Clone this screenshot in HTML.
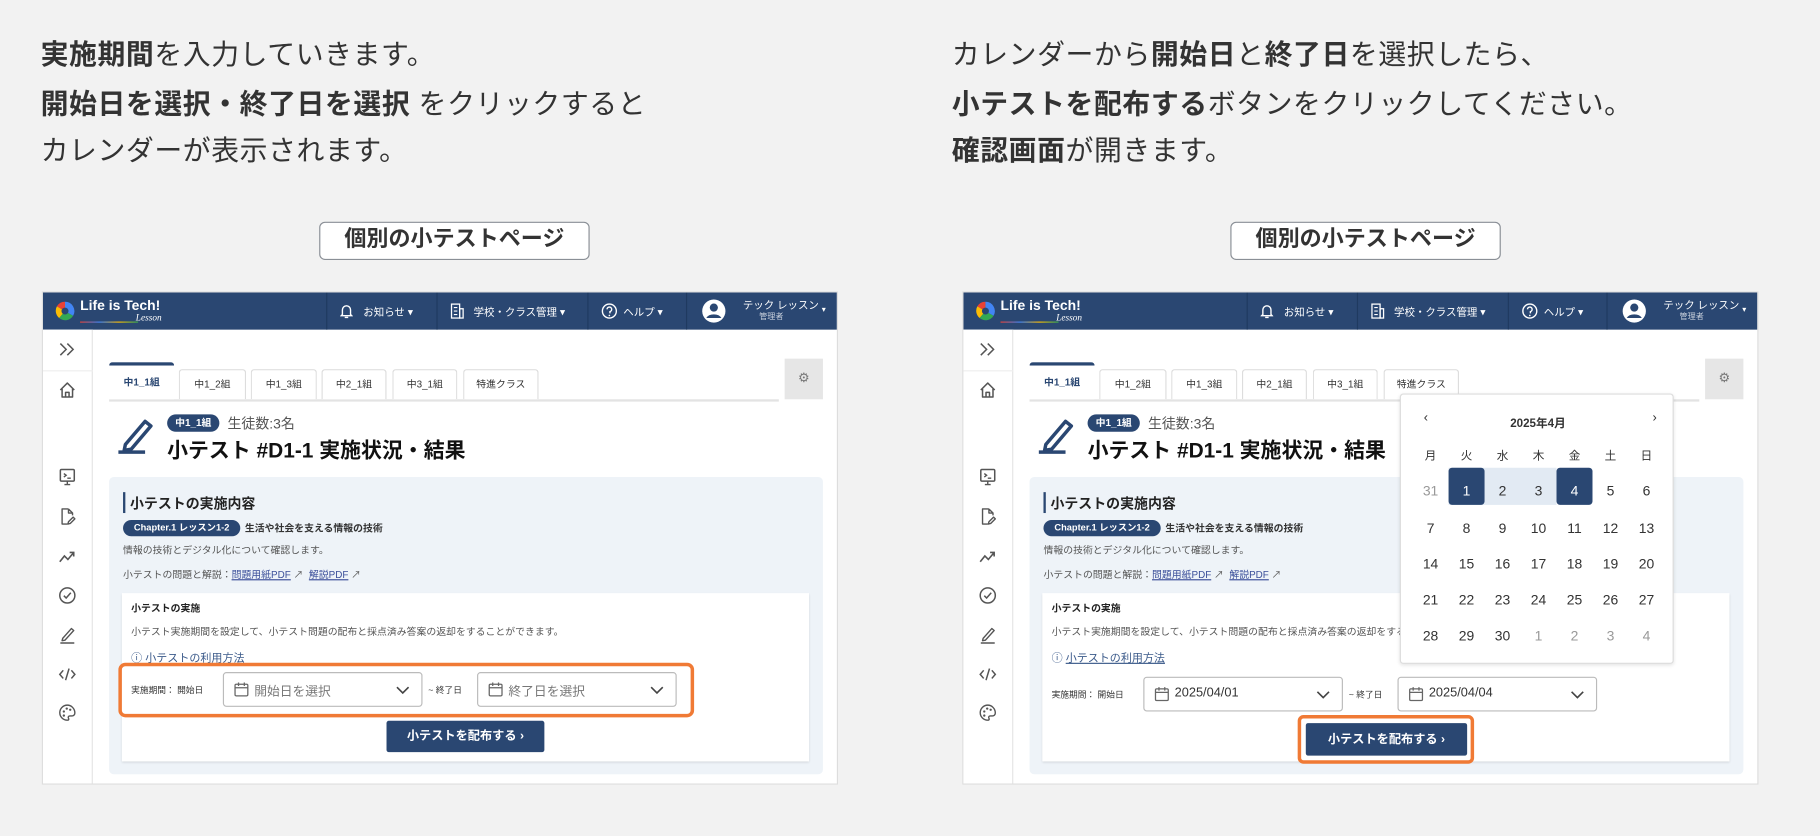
<!DOCTYPE html>
<html><head><meta charset="utf-8"><style>
*{box-sizing:border-box;margin:0;padding:0}
html,body{width:1820px;height:836px;overflow:hidden;background:#f2f2f2}
body{font-family:"Liberation Sans","Noto Sans CJK JP",sans-serif;color:#333}
#w{position:absolute;left:0;top:0;width:1568px;height:720px;transform:scale(1.16071);transform-origin:0 0}
.a{position:absolute;white-space:nowrap}
.txt{font-size:24px;line-height:41px;color:#333;letter-spacing:0.5px}
.txt b{font-weight:bold}
.lbl{position:absolute;top:191px;width:233px;height:33px;border:1.5px solid #8a8f96;border-radius:5px;background:#fff;font-size:19px;font-weight:bold;text-align:center;line-height:30px;color:#333}
.p{position:absolute;top:251px;width:686px;height:425px;background:#fff;border:1px solid #ddd;overflow:hidden}
.hd{position:absolute;left:0;top:0;width:100%;height:32px;background:#2a4772;color:#fff}
.hd .a{font-size:9px;top:10px}
.dv{position:absolute;top:0;width:1px;height:32px;background:#1f3a60}
.sb{position:absolute;left:0;top:32px;width:43px;height:393px;border-right:1px solid #e5e5e5;background:#fff}
.sb svg{position:absolute;left:13px}
.tab{position:absolute;top:66px;height:26px;border:1px solid #ddd;border-bottom:none;border-radius:3px 3px 0 0;font-size:8.5px;text-align:center;line-height:25px;color:#333;background:#fff}
.act{top:60px;height:32px;border:none;border-top:3px solid #2a4772;color:#2a4772;font-weight:bold;line-height:28px}
.navy{background:#2a4772;color:#fff}
.sel{position:absolute;height:30px;border:1px solid #bbb;border-radius:3px;background:#fff;font-size:11px}
.btn{position:absolute;background:#2a4772;color:#fff;font-size:10.5px;font-weight:bold;text-align:center;border-radius:2px}
.cal .a{font-size:12px;color:#333;text-align:center;width:31px}
</style></head><body><div id="w">

<div class="a txt" style="left:35px;top:27px"><b>実施期間</b>を入力していきます。</div>
<div class="a txt" style="left:35px;top:70px"><b>開始日を選択・終了日を選択</b> をクリックすると</div>
<div class="a txt" style="left:35px;top:110px">カレンダーが表示されます。</div>
<div class="a txt" style="left:820px;top:27px">カレンダーから<b>開始日</b>と<b>終了日</b>を選択したら、</div>
<div class="a txt" style="left:820px;top:70px"><b>小テストを配布する</b>ボタンをクリックしてください。</div>
<div class="a txt" style="left:820px;top:110px"><b>確認画面</b>が開きます。</div>
<div class="lbl" style="left:275px">個別の小テストページ</div>
<div class="lbl" style="left:1060px">個別の小テストページ</div>

<svg width="0" height="0" style="position:absolute"><defs>
<g id="cl"><rect x="1.5" y="2.5" width="11" height="10" rx="1" fill="none" stroke="#666" stroke-width="1.1"/><path d="M1.5 5.5h11M4.5 1v3M9.5 1v3" stroke="#666" stroke-width="1.1"/></g>
<g id="chev"><path d="M1 1l5 5 5-5" fill="none" stroke="#444" stroke-width="1.4"/></g>
</defs></svg>

<!-- LEFT -->
<div class="p" style="left:36px">
 <div class="hd">
  <svg class="a" style="left:10px;top:7px" width="18" height="18" viewBox="0 0 18 18"><path d="M9 9L9 1A8 8 0 0 0 2 5Z" fill="#e94235"/><path d="M9 9L2 5A8 8 0 0 0 4 15Z" fill="#fbbc04"/><path d="M9 9L4 15A8 8 0 0 0 16 13Z" fill="#34a853"/><path d="M9 9L16 13A8 8 0 0 0 9 1Z" fill="#4285f4"/><circle cx="9" cy="9" r="3" fill="#2a4772"/></svg>
  <div class="a" style="left:32px;top:4px;font-size:12px;font-weight:bold">Life is Tech!</div>
  <div class="a" style="left:32px;top:25px;width:50px;height:1px;background:linear-gradient(90deg,#e94235,#4285f4,#fbbc04,#34a853)"></div>
  <div class="a" style="left:80px;top:17px;font-size:8px;font-style:italic;font-family:'Liberation Serif',serif">Lesson</div>
  <div class="dv" style="left:244px"></div><div class="dv" style="left:339px"></div><div class="dv" style="left:469px"></div><div class="dv" style="left:554px"></div>
  <svg class="a" style="left:256px;top:9px" width="11" height="14" viewBox="0 0 11 14"><path d="M2 10V6a3.5 3.5 0 0 1 7 0v4l1 1H1z" fill="none" stroke="#fff" stroke-width="1.2"/><path d="M4 12.5h3" stroke="#fff" stroke-width="1.2"/></svg><div class="a" style="left:276px">お知らせ ▾</div>
  <svg class="a" style="left:351px;top:9px" width="12" height="14" viewBox="0 0 12 14"><rect x="1" y="1" width="7" height="12" fill="none" stroke="#fff" stroke-width="1.1"/><rect x="8" y="5" width="3" height="8" fill="none" stroke="#fff" stroke-width="1.1"/><path d="M3 4h3M3 7h3M3 10h3" stroke="#fff"/></svg><div class="a" style="left:371px">学校・クラス管理 ▾</div>
  <svg class="a" style="left:481px;top:9px" width="14" height="14" viewBox="0 0 14 14"><circle cx="7" cy="7" r="6" fill="none" stroke="#fff" stroke-width="1.2"/><path d="M5 5.5a2 2 0 1 1 2.5 2V9" fill="none" stroke="#fff" stroke-width="1.2"/><circle cx="7" cy="10.8" r=".7" fill="#fff"/></svg><div class="a" style="left:500px">ヘルプ ▾</div>
  <svg class="a" style="left:567px;top:5px" width="22" height="22" viewBox="0 0 22 22"><circle cx="11" cy="11" r="10" fill="#fff"/><circle cx="11" cy="8" r="3.5" fill="#2a4772"/><path d="M4.5 17a7 5 0 0 1 13 0" fill="#2a4772"/></svg>
  <div class="a" style="left:603px;top:4px">テック レッスン</div><div class="a" style="left:617px;top:16px;font-size:7px;color:#c8d0dc">管理者</div><div class="a" style="left:671px;top:11px;font-size:7px">▾</div>
 </div>
 <div class="sb">
  <svg style="top:11px" width="16" height="12" viewBox="0 0 16 12"><path d="M2 1l5 5-5 5M8 1l5 5-5 5" fill="none" stroke="#555" stroke-width="1.3"/></svg>
  <div class="a" style="left:0;top:35px;width:43px;height:1px;background:#eee"></div>
  <svg style="top:44px" width="16" height="16" viewBox="0 0 16 16"><path d="M2 8L8 2l6 6M3.5 7v7h9V7M6.5 14v-4h3v4" fill="none" stroke="#555" stroke-width="1.3" stroke-linejoin="round"/></svg>
  <svg style="top:119px" width="16" height="16" viewBox="0 0 16 16"><rect x="2" y="1.5" width="12" height="10" rx="1" fill="none" stroke="#555" stroke-width="1.3"/><path d="M5 5l2 1.5L5 8M8 9h3M8 11.5v3M5.5 14.5h5" fill="none" stroke="#555" stroke-width="1.2"/></svg>
  <svg style="top:153px" width="16" height="16" viewBox="0 0 16 16"><path d="M9 1.5H3.5v13H8M9 1.5l3.5 3.5V7M9 1.5V5h3.5M13 8.5l-4 4-.5 2 2-.5 4-4z" fill="none" stroke="#555" stroke-width="1.2" stroke-linejoin="round"/></svg>
  <svg style="top:188px" width="16" height="16" viewBox="0 0 16 16"><path d="M1.5 12l4-5 3 3 5-6M10 4h3.5v3.5" fill="none" stroke="#555" stroke-width="1.4"/></svg>
  <svg style="top:221px" width="16" height="16" viewBox="0 0 16 16"><circle cx="8" cy="8" r="6.5" fill="none" stroke="#555" stroke-width="1.3"/><path d="M5 8.2l2 2 4-4.5" fill="none" stroke="#555" stroke-width="1.3"/></svg>
  <svg style="top:255px" width="16" height="16" viewBox="0 0 16 16"><path d="M4 11l7.5-8.5 2 1.7L6 12.5l-2.5.5z" fill="none" stroke="#555" stroke-width="1.2" stroke-linejoin="round"/><path d="M2 15h12" stroke="#555" stroke-width="1.3"/></svg>
  <svg style="top:289px" width="16" height="16" viewBox="0 0 16 16"><path d="M4.5 4.5L1.5 8l3 3.5M11.5 4.5l3 3.5-3 3.5M9.5 3l-3 10" fill="none" stroke="#555" stroke-width="1.3"/></svg>
  <svg style="top:322px" width="16" height="16" viewBox="0 0 16 16"><path d="M8 1.5a6.5 6.5 0 0 0 0 13c1.2 0 1.5-.8 1-1.7-.5-1 0-2 1.2-2H12a2.5 2.5 0 0 0 2.5-2.5C14.5 4.5 11.5 1.5 8 1.5z" fill="none" stroke="#555" stroke-width="1.2"/><circle cx="5" cy="7" r="1" fill="#555"/><circle cx="7.5" cy="4.5" r="1" fill="#555"/><circle cx="10.5" cy="5.5" r="1" fill="#555"/><circle cx="5" cy="10.5" r="1" fill="#555"/></svg>
 </div>
 <div class="a" style="left:57px;top:92px;width:577px;height:2px;background:#e3e3e3"></div>
 <div class="tab act" style="left:57px;width:56px">中1_1組</div>
 <div class="tab" style="left:117px;width:58px">中1_2組</div>
 <div class="tab" style="left:179px;width:57px">中1_3組</div>
 <div class="tab" style="left:240px;width:56px">中2_1組</div>
 <div class="tab" style="left:301px;width:56px">中3_1組</div>
 <div class="tab" style="left:362px;width:65px">特進クラス</div>
 <div class="a" style="left:639px;top:57px;width:33px;height:35px;background:#e6e6e6;font-size:11px;color:#777;text-align:center;line-height:35px">⚙</div>
 <svg class="a" style="left:64px;top:106px" width="33" height="34" viewBox="0 0 33 34"><path d="M7 25L24 5l5 4-17 20-6 1z" fill="none" stroke="#2a4772" stroke-width="3" stroke-linejoin="round"/><rect x="1" y="30" width="23" height="3" fill="#2a4772"/></svg>
 <div class="a navy" style="left:107px;top:105px;width:45px;height:15px;border-radius:8px;font-size:8.5px;font-weight:bold;text-align:center;line-height:15px">中1_1組</div>
 <div class="a" style="left:159px;top:104px;font-size:12px;color:#555">生徒数:3名</div>
 <div class="a" style="left:107px;top:122px;font-size:18px;font-weight:bold;color:#111">小テスト #D1-1 実施状況・結果</div>
 <div class="a" style="left:57px;top:159px;width:615px;height:256px;background:#eef3f8;border-radius:4px"></div>
 <div class="a" style="left:69px;top:172px;width:2px;height:18px;background:#2a4772"></div>
 <div class="a" style="left:75px;top:173px;font-size:12px;font-weight:bold;color:#222">小テストの実施内容</div>
 <div class="a navy" style="left:69px;top:196px;width:101px;height:14px;border-radius:7px;font-size:8px;font-weight:bold;text-align:center;line-height:14px">Chapter.1 レッスン1-2</div>
 <div class="a" style="left:174px;top:197px;font-size:8.5px;font-weight:bold;color:#333">生活や社会を支える情報の技術</div>
 <div class="a" style="left:69px;top:216px;font-size:8.5px;color:#555">情報の技術とデジタル化について確認します。</div>
 <div class="a" style="left:69px;top:237px;font-size:8.5px;color:#555">小テストの問題と解説：<span style="color:#3b4f9a;text-decoration:underline">問題用紙PDF</span> ↗ &nbsp;<span style="color:#3b4f9a;text-decoration:underline">解説PDF</span> ↗</div>
 <div class="a" style="left:68px;top:259px;width:592px;height:145px;background:#fff;box-shadow:0 1px 2px rgba(0,0,0,.12)"></div>
 <div class="a" style="left:76px;top:266px;font-size:8.5px;font-weight:bold;color:#222">小テストの実施</div>
 <div class="a" style="left:76px;top:286px;font-size:8.5px;color:#555">小テスト実施期間を設定して、小テスト問題の配布と採点済み答案の返却をすることができます。</div>
 <div class="a" style="left:76px;top:307px;font-size:9.5px;color:#3b5a8a">ⓘ 小テストの利用方法</div>
 <div class="a" style="left:65px;top:319px;width:496px;height:47px;border:3px solid #f07a35;border-radius:6px"></div>
 <div class="a" style="left:76px;top:337px;font-size:7.5px;color:#333">実施期間： 開始日</div>
 <div class="sel" style="left:155px;top:327px;width:172px"><svg class="a" style="left:8px;top:7px" width="14" height="14"><use href="#cl"/></svg><span class="a" style="left:26px;top:7px;color:#777">開始日を選択</span><svg class="a" style="right:10px;top:11px" width="12" height="8"><use href="#chev"/></svg></div>
 <div class="a" style="left:332px;top:337px;font-size:7.5px;color:#333">~ 終了日</div>
 <div class="sel" style="left:374px;top:327px;width:172px"><svg class="a" style="left:8px;top:7px" width="14" height="14"><use href="#cl"/></svg><span class="a" style="left:26px;top:7px;color:#777">終了日を選択</span><svg class="a" style="right:10px;top:11px" width="12" height="8"><use href="#chev"/></svg></div>
 <div class="btn" style="left:296px;top:369px;width:136px;height:27px;line-height:27px">小テストを配布する ›</div>
</div>

<!-- RIGHT -->
<div class="p" style="left:829px">
 <div class="hd">
  <svg class="a" style="left:10px;top:7px" width="18" height="18" viewBox="0 0 18 18"><path d="M9 9L9 1A8 8 0 0 0 2 5Z" fill="#e94235"/><path d="M9 9L2 5A8 8 0 0 0 4 15Z" fill="#fbbc04"/><path d="M9 9L4 15A8 8 0 0 0 16 13Z" fill="#34a853"/><path d="M9 9L16 13A8 8 0 0 0 9 1Z" fill="#4285f4"/><circle cx="9" cy="9" r="3" fill="#2a4772"/></svg>
  <div class="a" style="left:32px;top:4px;font-size:12px;font-weight:bold">Life is Tech!</div>
  <div class="a" style="left:32px;top:25px;width:50px;height:1px;background:linear-gradient(90deg,#e94235,#4285f4,#fbbc04,#34a853)"></div>
  <div class="a" style="left:80px;top:17px;font-size:8px;font-style:italic;font-family:'Liberation Serif',serif">Lesson</div>
  <div class="dv" style="left:244px"></div><div class="dv" style="left:339px"></div><div class="dv" style="left:469px"></div><div class="dv" style="left:554px"></div>
  <svg class="a" style="left:256px;top:9px" width="11" height="14" viewBox="0 0 11 14"><path d="M2 10V6a3.5 3.5 0 0 1 7 0v4l1 1H1z" fill="none" stroke="#fff" stroke-width="1.2"/><path d="M4 12.5h3" stroke="#fff" stroke-width="1.2"/></svg><div class="a" style="left:276px">お知らせ ▾</div>
  <svg class="a" style="left:351px;top:9px" width="12" height="14" viewBox="0 0 12 14"><rect x="1" y="1" width="7" height="12" fill="none" stroke="#fff" stroke-width="1.1"/><rect x="8" y="5" width="3" height="8" fill="none" stroke="#fff" stroke-width="1.1"/><path d="M3 4h3M3 7h3M3 10h3" stroke="#fff"/></svg><div class="a" style="left:371px">学校・クラス管理 ▾</div>
  <svg class="a" style="left:481px;top:9px" width="14" height="14" viewBox="0 0 14 14"><circle cx="7" cy="7" r="6" fill="none" stroke="#fff" stroke-width="1.2"/><path d="M5 5.5a2 2 0 1 1 2.5 2V9" fill="none" stroke="#fff" stroke-width="1.2"/><circle cx="7" cy="10.8" r=".7" fill="#fff"/></svg><div class="a" style="left:500px">ヘルプ ▾</div>
  <svg class="a" style="left:567px;top:5px" width="22" height="22" viewBox="0 0 22 22"><circle cx="11" cy="11" r="10" fill="#fff"/><circle cx="11" cy="8" r="3.5" fill="#2a4772"/><path d="M4.5 17a7 5 0 0 1 13 0" fill="#2a4772"/></svg>
  <div class="a" style="left:603px;top:4px">テック レッスン</div><div class="a" style="left:617px;top:16px;font-size:7px;color:#c8d0dc">管理者</div><div class="a" style="left:671px;top:11px;font-size:7px">▾</div>
 </div>
 <div class="sb">
  <svg style="top:11px" width="16" height="12" viewBox="0 0 16 12"><path d="M2 1l5 5-5 5M8 1l5 5-5 5" fill="none" stroke="#555" stroke-width="1.3"/></svg>
  <div class="a" style="left:0;top:35px;width:43px;height:1px;background:#eee"></div>
  <svg style="top:44px" width="16" height="16" viewBox="0 0 16 16"><path d="M2 8L8 2l6 6M3.5 7v7h9V7M6.5 14v-4h3v4" fill="none" stroke="#555" stroke-width="1.3" stroke-linejoin="round"/></svg>
  <svg style="top:119px" width="16" height="16" viewBox="0 0 16 16"><rect x="2" y="1.5" width="12" height="10" rx="1" fill="none" stroke="#555" stroke-width="1.3"/><path d="M5 5l2 1.5L5 8M8 9h3M8 11.5v3M5.5 14.5h5" fill="none" stroke="#555" stroke-width="1.2"/></svg>
  <svg style="top:153px" width="16" height="16" viewBox="0 0 16 16"><path d="M9 1.5H3.5v13H8M9 1.5l3.5 3.5V7M9 1.5V5h3.5M13 8.5l-4 4-.5 2 2-.5 4-4z" fill="none" stroke="#555" stroke-width="1.2" stroke-linejoin="round"/></svg>
  <svg style="top:188px" width="16" height="16" viewBox="0 0 16 16"><path d="M1.5 12l4-5 3 3 5-6M10 4h3.5v3.5" fill="none" stroke="#555" stroke-width="1.4"/></svg>
  <svg style="top:221px" width="16" height="16" viewBox="0 0 16 16"><circle cx="8" cy="8" r="6.5" fill="none" stroke="#555" stroke-width="1.3"/><path d="M5 8.2l2 2 4-4.5" fill="none" stroke="#555" stroke-width="1.3"/></svg>
  <svg style="top:255px" width="16" height="16" viewBox="0 0 16 16"><path d="M4 11l7.5-8.5 2 1.7L6 12.5l-2.5.5z" fill="none" stroke="#555" stroke-width="1.2" stroke-linejoin="round"/><path d="M2 15h12" stroke="#555" stroke-width="1.3"/></svg>
  <svg style="top:289px" width="16" height="16" viewBox="0 0 16 16"><path d="M4.5 4.5L1.5 8l3 3.5M11.5 4.5l3 3.5-3 3.5M9.5 3l-3 10" fill="none" stroke="#555" stroke-width="1.3"/></svg>
  <svg style="top:322px" width="16" height="16" viewBox="0 0 16 16"><path d="M8 1.5a6.5 6.5 0 0 0 0 13c1.2 0 1.5-.8 1-1.7-.5-1 0-2 1.2-2H12a2.5 2.5 0 0 0 2.5-2.5C14.5 4.5 11.5 1.5 8 1.5z" fill="none" stroke="#555" stroke-width="1.2"/><circle cx="5" cy="7" r="1" fill="#555"/><circle cx="7.5" cy="4.5" r="1" fill="#555"/><circle cx="10.5" cy="5.5" r="1" fill="#555"/><circle cx="5" cy="10.5" r="1" fill="#555"/></svg>
 </div>
 <div class="a" style="left:57px;top:92px;width:577px;height:2px;background:#e3e3e3"></div>
 <div class="tab act" style="left:57px;width:56px">中1_1組</div>
 <div class="tab" style="left:117px;width:58px">中1_2組</div>
 <div class="tab" style="left:179px;width:57px">中1_3組</div>
 <div class="tab" style="left:240px;width:56px">中2_1組</div>
 <div class="tab" style="left:301px;width:56px">中3_1組</div>
 <div class="tab" style="left:362px;width:65px">特進クラス</div>
 <div class="a" style="left:639px;top:57px;width:33px;height:35px;background:#e6e6e6;font-size:11px;color:#777;text-align:center;line-height:35px">⚙</div>
 <svg class="a" style="left:64px;top:106px" width="33" height="34" viewBox="0 0 33 34"><path d="M7 25L24 5l5 4-17 20-6 1z" fill="none" stroke="#2a4772" stroke-width="3" stroke-linejoin="round"/><rect x="1" y="30" width="23" height="3" fill="#2a4772"/></svg>
 <div class="a navy" style="left:107px;top:105px;width:45px;height:15px;border-radius:8px;font-size:8.5px;font-weight:bold;text-align:center;line-height:15px">中1_1組</div>
 <div class="a" style="left:159px;top:104px;font-size:12px;color:#555">生徒数:3名</div>
 <div class="a" style="left:107px;top:122px;font-size:18px;font-weight:bold;color:#111">小テスト #D1-1 実施状況・結果</div>
 <div class="a" style="left:57px;top:159px;width:615px;height:256px;background:#eef3f8;border-radius:4px"></div>
 <div class="a" style="left:69px;top:172px;width:2px;height:18px;background:#2a4772"></div>
 <div class="a" style="left:75px;top:173px;font-size:12px;font-weight:bold;color:#222">小テストの実施内容</div>
 <div class="a navy" style="left:69px;top:196px;width:101px;height:14px;border-radius:7px;font-size:8px;font-weight:bold;text-align:center;line-height:14px">Chapter.1 レッスン1-2</div>
 <div class="a" style="left:174px;top:197px;font-size:8.5px;font-weight:bold;color:#333">生活や社会を支える情報の技術</div>
 <div class="a" style="left:69px;top:216px;font-size:8.5px;color:#555">情報の技術とデジタル化について確認します。</div>
 <div class="a" style="left:69px;top:237px;font-size:8.5px;color:#555">小テストの問題と解説：<span style="color:#3b4f9a;text-decoration:underline">問題用紙PDF</span> ↗ &nbsp;<span style="color:#3b4f9a;text-decoration:underline">解説PDF</span> ↗</div>
 <div class="a" style="left:68px;top:259px;width:592px;height:145px;background:#fff;box-shadow:0 1px 2px rgba(0,0,0,.12)"></div>
 <div class="a" style="left:76px;top:266px;font-size:8.5px;font-weight:bold;color:#222">小テストの実施</div>
 <div class="a" style="left:76px;top:286px;font-size:8.5px;color:#555">小テスト実施期間を設定して、小テスト問題の配布と採点済み答案の返却をすることができます。</div>
 <div class="a" style="left:76px;top:307px;font-size:9.5px;color:#3b5a8a">ⓘ <span style="text-decoration:underline">小テストの利用方法</span></div>
 <div class="a" style="left:76px;top:341px;font-size:7.5px;color:#333">実施期間： 開始日</div>
 <div class="sel" style="left:155px;top:331px;width:172px"><svg class="a" style="left:8px;top:7px" width="14" height="14"><use href="#cl"/></svg><span class="a" style="left:26px;top:7px;color:#333">2025/04/01</span><svg class="a" style="right:10px;top:11px" width="12" height="8"><use href="#chev"/></svg></div>
 <div class="a" style="left:332px;top:341px;font-size:7.5px;color:#333">~ 終了日</div>
 <div class="sel" style="left:374px;top:331px;width:172px"><svg class="a" style="left:8px;top:7px" width="14" height="14"><use href="#cl"/></svg><span class="a" style="left:26px;top:7px;color:#333">2025/04/04</span><svg class="a" style="right:10px;top:11px" width="12" height="8"><use href="#chev"/></svg></div>
 <div class="a" style="left:288px;top:364px;width:152px;height:42px;border:3px solid #f07a35;border-radius:5px"></div>
 <div class="btn" style="left:295px;top:371px;width:139px;height:28px;line-height:28px">小テストを配布する ›</div>
 <div class="a cal" style="left:376px;top:87px;width:236px;height:233px;background:#fff;border:1px solid #ddd;border-radius:3px;box-shadow:0 1px 3px rgba(0,0,0,.1)">
  <div class="a" style="left:6px;top:14px;font-size:11px">‹</div>
  <div class="a" style="left:80px;top:16px;width:76px;font-size:10px;font-weight:bold">2025年4月</div>
  <div class="a" style="left:203px;top:14px;font-size:11px">›</div>
  <div class="a" style="left:41px;top:63px;width:93px;height:32px;background:#e2eaf3"></div>
  <div class="a navy" style="left:41px;top:63px;width:31px;height:32px;border-radius:3px"></div>
  <div class="a navy" style="left:134px;top:63px;width:31px;height:32px;border-radius:3px"></div>
  <div class="a" style="left:10px;top:44px;font-size:10px">月</div><div class="a" style="left:41px;top:44px;font-size:10px">火</div><div class="a" style="left:72px;top:44px;font-size:10px">水</div><div class="a" style="left:103px;top:44px;font-size:10px">木</div><div class="a" style="left:134px;top:44px;font-size:10px">金</div><div class="a" style="left:165px;top:44px;font-size:10px">土</div><div class="a" style="left:196px;top:44px;font-size:10px">日</div>
  <div class="a" style="left:10px;top:76px;color:#999">31</div><div class="a" style="left:41px;top:76px;color:#fff">1</div><div class="a" style="left:72px;top:76px">2</div><div class="a" style="left:103px;top:76px">3</div><div class="a" style="left:134px;top:76px;color:#fff">4</div><div class="a" style="left:165px;top:76px">5</div><div class="a" style="left:196px;top:76px">6</div>
  <div class="a" style="left:10px;top:108px">7</div><div class="a" style="left:41px;top:108px">8</div><div class="a" style="left:72px;top:108px">9</div><div class="a" style="left:103px;top:108px">10</div><div class="a" style="left:134px;top:108px">11</div><div class="a" style="left:165px;top:108px">12</div><div class="a" style="left:196px;top:108px">13</div>
  <div class="a" style="left:10px;top:139px">14</div><div class="a" style="left:41px;top:139px">15</div><div class="a" style="left:72px;top:139px">16</div><div class="a" style="left:103px;top:139px">17</div><div class="a" style="left:134px;top:139px">18</div><div class="a" style="left:165px;top:139px">19</div><div class="a" style="left:196px;top:139px">20</div>
  <div class="a" style="left:10px;top:170px">21</div><div class="a" style="left:41px;top:170px">22</div><div class="a" style="left:72px;top:170px">23</div><div class="a" style="left:103px;top:170px">24</div><div class="a" style="left:134px;top:170px">25</div><div class="a" style="left:165px;top:170px">26</div><div class="a" style="left:196px;top:170px">27</div>
  <div class="a" style="left:10px;top:201px">28</div><div class="a" style="left:41px;top:201px">29</div><div class="a" style="left:72px;top:201px">30</div><div class="a" style="left:103px;top:201px;color:#999">1</div><div class="a" style="left:134px;top:201px;color:#999">2</div><div class="a" style="left:165px;top:201px;color:#999">3</div><div class="a" style="left:196px;top:201px;color:#999">4</div>
 </div>
</div>

</div></body></html>
